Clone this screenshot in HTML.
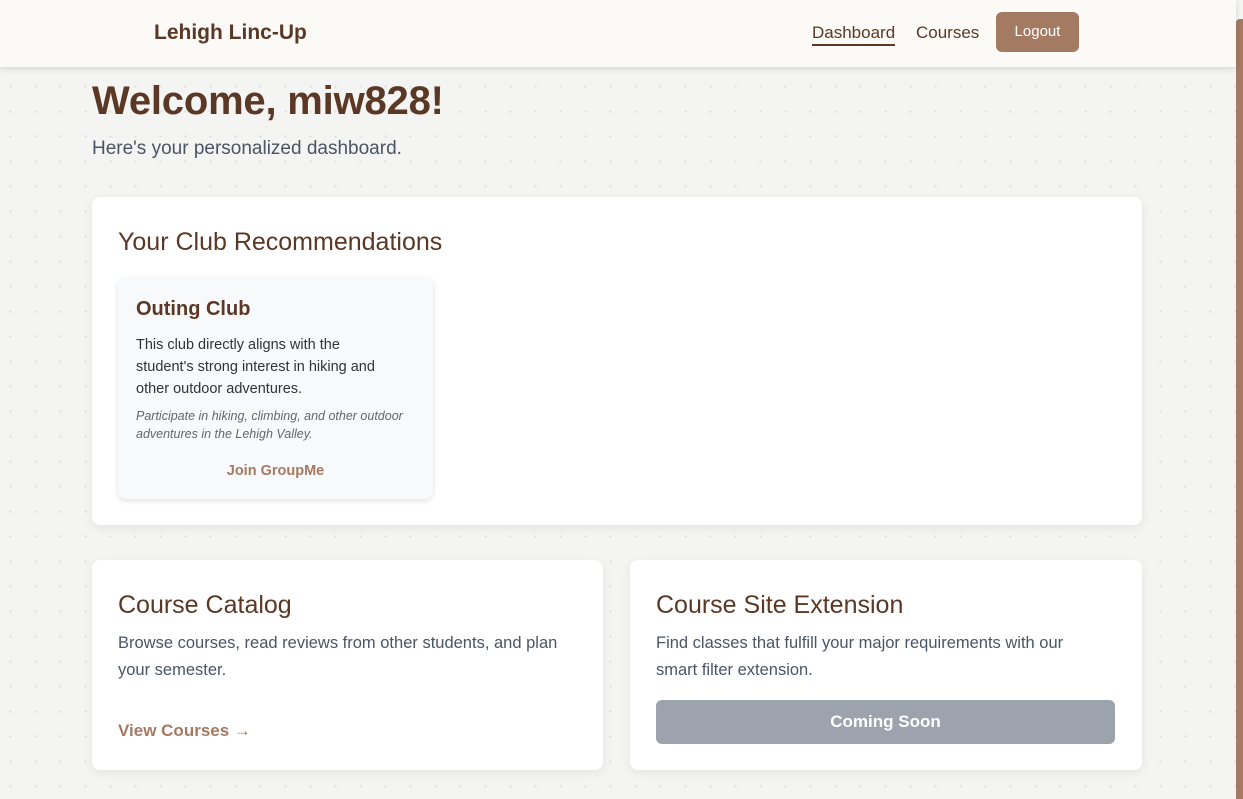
<!DOCTYPE html>
<html><head><style>
*{box-sizing:border-box;margin:0;padding:0}
body{width:1243px;height:799px;overflow:hidden;font-family:"Liberation Sans",sans-serif;background-color:#f4f4f2;background-image:radial-gradient(circle,#dcdcd8 1px,transparent 1.3px);background-size:25px 25px;background-position:-2px -1px;position:relative}
.nav{position:absolute;left:0;top:0;width:1236px;height:67px;background:#fbfaf6;box-shadow:0 2px 6px rgba(0,0,0,.12);z-index:2}
.logo{position:absolute;left:154px;top:21px;font-size:21px;font-weight:bold;color:#5a3825}
.nl{position:absolute;top:23px;font-size:17px;color:#5a3825}
.btn{position:absolute;left:996px;top:12px;width:83px;height:40px;background:#a47a62;border-radius:6px;color:#fff;font-size:15px;text-align:center;line-height:40px}
.sb{position:absolute;right:0;top:19px;width:7px;height:780px;background:#a47a62;border-radius:4px 0 0 0}
h1{position:absolute;left:92px;top:79px;font-size:40px;color:#5a3825;letter-spacing:-.2px}
.sub{position:absolute;left:92px;top:138px;font-size:19px;color:#4a5566}
.card{position:absolute;background:#fff;border-radius:8px;box-shadow:0 3px 10px rgba(0,0,0,.07)}
.card h2{font-size:25px;font-weight:normal;color:#5a3825;position:absolute;left:26px}
.p{position:absolute;left:26px;font-size:16.5px;color:#4a5566;line-height:27px}
.club{position:absolute;left:118px;top:277px;width:315px;height:222px;background:#f8f9fa;border-radius:8px;box-shadow:0 2px 6px rgba(0,0,0,.12)}
</style></head><body>
<div class="nav"><div class="logo">Lehigh Linc-Up</div>
<div class="nl" style="left:812px;border-bottom:2px solid #5a3825;padding-bottom:1px">Dashboard</div>
<div class="nl" style="left:916px">Courses</div>
<div class="btn">Logout</div></div>
<div class="sb"></div>
<h1>Welcome, miw828!</h1>
<div class="sub">Here's your personalized dashboard.</div>
<div class="card" style="left:92px;top:197px;width:1050px;height:328px"><h2 style="top:31px">Your Club Recommendations</h2></div>
<div class="club">
<div style="position:absolute;left:18px;top:21px;font-size:20px;font-weight:bold;color:#5a3825">Outing Club</div>
<div style="position:absolute;left:18px;top:57px;width:262px;font-size:14.5px;line-height:22px;color:#333">This club directly aligns with the student's strong interest in hiking and other outdoor adventures.</div>
<div style="position:absolute;left:18px;top:130px;width:290px;font-size:12.5px;line-height:18px;color:#666;font-style:italic">Participate in hiking, climbing, and other outdoor adventures in the Lehigh Valley.</div>
<div style="position:absolute;left:0;width:315px;top:186px;text-align:center;font-size:14.5px;font-weight:bold;color:#a47a62">Join GroupMe</div>
</div>
<div class="card" style="left:92px;top:560px;width:511px;height:210px"><h2 style="top:31px">Course Catalog</h2>
<div class="p" style="top:70px;width:470px">Browse courses, read reviews from other students, and plan your semester.</div>
<div style="position:absolute;left:26px;top:161px;font-size:17px;font-weight:bold;color:#a47a62">View Courses →</div></div>
<div class="card" style="left:630px;top:560px;width:512px;height:210px"><h2 style="top:31px">Course Site Extension</h2>
<div class="p" style="top:70px;width:440px">Find classes that fulfill your major requirements with our smart filter extension.</div>
<div style="position:absolute;left:26px;top:140px;width:459px;height:44px;background:#9ca3ad;border-radius:6px;color:#fff;font-size:17px;font-weight:bold;text-align:center;line-height:44px">Coming Soon</div></div>
</body></html>
